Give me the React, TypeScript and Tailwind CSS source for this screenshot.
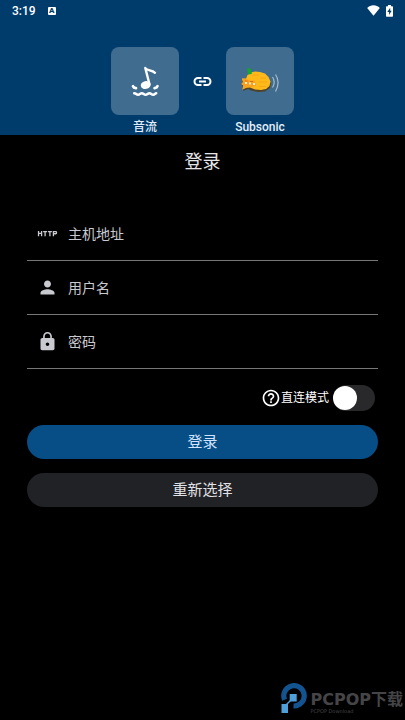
import React from 'react'
import { MdHelpOutline, MdHttp, MdLock, MdPerson } from 'react-icons/md'

const StatusBar = () => {
  return (
    <div className="flex h-[21px] items-center justify-between px-3 text-white">
      <div className="flex items-center gap-3">
        <span className="text-xs font-medium">3:19</span>
        <span className="flex h-2 w-2 items-center justify-center rounded-[1px] bg-white text-[8px] font-black text-[#003c6b]">A</span>
      </div>
      <div className="flex items-center gap-1.5">
        <svg width="13" height="11" viewBox="0 0 13 11" fill="currentColor">
          <path d="M6.5 10.8 0.2 3C2 1.3 4 .3 6.5.3S11 1.3 12.8 3z" />
        </svg>
        <svg width="7" height="12" viewBox="0 0 7 12">
          <path d="M2 0h3v1.2h1.2q.8 0 .8.8v9q0 .8-.8.8H.8q-.8 0-.8-.8V2q0-.8.8-.8H2z" fill="white" />
          <path d="M4.2 2.7 1.3 7h1.8v3L5.7 5.8H4.2z" fill="#003c6b" />
        </svg>
      </div>
    </div>
  )
}

const NoteIcon = () => (
  <svg width="32" height="32" viewBox="0 0 32 32" fill="none" stroke="white" strokeLinecap="round" strokeLinejoin="round">
    <ellipse cx="16.7" cy="20" rx="5" ry="3.9" fill="white" stroke="none" transform="rotate(-12 16.7 20)" />
    <path d="M20.4 19 16.3 3C18.2 6.2 22.5 4.5 26 7.8" strokeWidth="2.4" />
    <path d="M4 21.2Q4.6 22.8 7 23.2M28.5 21.2Q28 22.8 25.6 23.2" strokeWidth="2.7" />
    <path d="M5.2 28.3c2 0 2 1.5 3.8 1.5s2-1.5 3.8-1.5 2 1.5 3.8 1.5 2-1.5 3.8-1.5 2 1.5 3.8 1.5 1.8-1.5 3-1.5" strokeWidth="2.5" />
  </svg>
)

const LinkIcon = () => (
  <svg width="21" height="21" viewBox="0 0 21 21" fill="none" stroke="white" strokeWidth="2">
    <path d="M9.5 7H6a3.5 3.5 0 0 0 0 7h3.500M11.500 7H15a3.500 3.500 0 0 1 0 7h-3.500M7 10.500h7" />
  </svg>
)

const SubmarineIcon = () => (
  <svg width="40" height="32" viewBox="0 0 40 32" fill="none">
    <path d="M2 15.5l3-1 4-5 6-1 9 2 5 4 2 4-1 4.500-5 3.500-7 .5-7-1.500-3-1.500-5 2 .8-4-1.500-1.500z" fill="#4d432c" />
    <path d="M2 13.500l4 0 1.500-3.500L11 7.500l4-1 5 .5 5 1.500 3.500 3.500 2 4.500-1 4.500-3.500 3-5 1-6-.5-5-2-3.500.3L2.500 24.500l1-4L1.500 19l1.500-2z" fill="#fdb81a" />
    <path d="M2 13.500l4 .5 4 1.500 4.500 0 1.500 5-4 1.500-5-.5-4.500 3 1-4L1.500 19l1.500-2z" fill="#fb9f1f" />
    <path d="M12 10h7M20 13h6M19 17h8M19 21.500h7" stroke="#f5a715" strokeWidth="1" />
    <path d="M8 9.500 7.300 3l3.700 1 .8 5z" fill="#11a92b" />
    <path d="M5 18h2M9 18.500h2M13 19h2" stroke="#fff1c4" strokeWidth="2" />
    <path d="M5 16h2.500M10 16.500h3" stroke="#d9701a" strokeWidth="1" />
    <path d="M32.500 12q3.400 4.700 0 10.500M35.500 9.500q5.200 7.500 0 17" stroke="#a6bbcc" strokeWidth="1.2" />
  </svg>
)

const Tile = ({ name, children }: { name: string; children: React.ReactNode }) => {
  return (
    <div className="flex w-[68px] flex-col items-center">
      <div className="flex h-[68px] w-full items-center justify-center rounded-lg bg-[#406c90]">{children}</div>
      <span className="mt-1 text-xs leading-4 font-medium text-[#e4eefa]">{name}</span>
    </div>
  )
}

const Field = ({ label, type, icon }: { label: string; type: string; icon: React.ReactNode }) => {
  return (
    <label className="flex h-[54px] items-center gap-2.5 border-b border-[#777777] pl-2.5 text-[#c9c9d0]">
      {icon}
      <input
        type={type}
        aria-label={label}
        placeholder={label}
        className="min-w-0 flex-1 bg-transparent text-sm text-white outline-none placeholder:text-[#c9c9d0]"
      />
    </label>
  )
}

const Watermark = () => {
  return (
    <div className="mt-auto flex items-end justify-end gap-0.5 pr-0.5 pb-1.5 text-[#454547]">
      <svg width="28" height="31" viewBox="0 0 28 31">
        <path d="M4.6 16.8A10.2 10.2 0 1 1 13.5 23" fill="none" stroke="#135490" strokeWidth="5.2" />
        <path d="M6.5 21.5 11 17" stroke="#4e9fda" strokeWidth="1.5" />
        <path d="M9.7 11h7v7.500h-7zM1.500 21h6.500v9H1.500z" fill="#4e9fda" />
      </svg>
      <div className="flex flex-col">
        <div className="flex items-center whitespace-nowrap text-base leading-4 font-bold">
          <span className="font-['DejaVu_Sans',sans-serif]">PCPOP</span>
          <span>下载</span>
        </div>
        <span className="font-['DejaVu_Sans',sans-serif] text-[5px] leading-[6px]">PCPOP Download</span>
      </div>
    </div>
  )
}

const App = () => {
  return (
    <div className="flex min-h-screen flex-col bg-black font-[Roboto,'Noto_Sans_CJK_SC',sans-serif]">
      <header className="h-[135px] bg-[#003c6b]">
        <StatusBar />
        <div className="mt-[26px] flex justify-center gap-3">
          <Tile name="音流"><NoteIcon /></Tile>
          <div className="flex h-[68px] items-center px-px">
            <LinkIcon />
          </div>
          <Tile name="Subsonic"><SubmarineIcon /></Tile>
        </div>
      </header>

      <main className="px-[27px]">
        <h1 className="pt-[13px] text-center text-lg text-[#e6e6e8]">登录</h1>
        <form className="mt-[31px] flex flex-col">
          <Field label="主机地址" type="text" icon={<MdHttp size={21} />} />
          <Field label="用户名" type="text" icon={<MdPerson size={21} />} />
          <Field label="密码" type="password" icon={<MdLock size={21} />} />

          <label className="mt-4 flex items-center justify-end pr-[3px] text-xs text-white">
            <MdHelpOutline size={20} />
            <span className="mr-1">直连模式</span>
            <input type="checkbox" role="switch" className="peer sr-only" />
            <span className="flex h-[26px] w-[42px] items-center rounded-full bg-[#29292b] peer-checked:justify-end peer-checked:bg-[#074e87]">
              <span className="h-6 w-6 rounded-full bg-white"></span>
            </span>
          </label>

          <button type="submit" className="mt-3.5 h-[34px] rounded-full bg-[#074e87] text-[15px] text-[#d3e4ff]">登录</button>
          <button type="button" className="mt-3.5 h-[34px] rounded-full bg-[#212225] text-[15px] text-[#e2e2e6]">重新选择</button>
        </form>
      </main>

      <Watermark />
    </div>
  )
}

export default App
